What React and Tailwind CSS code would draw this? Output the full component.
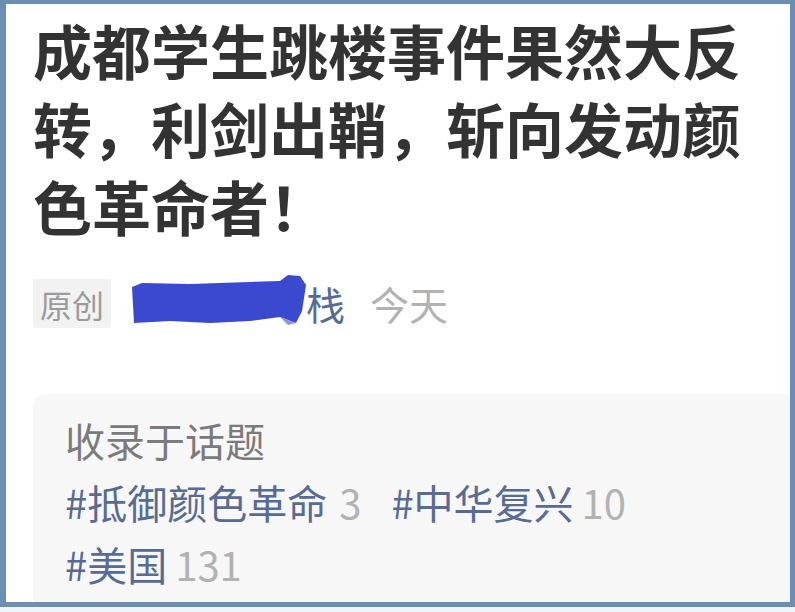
export default function App() {
  const font = { fontFamily: '"Noto Sans CJK SC", "Noto Sans", sans-serif' };
  return (
    <div className="w-[795px] h-[612px] overflow-hidden bg-[#eef6f8]" style={font}>
      <div className="h-[607px] border-t-[4px] border-l-[6px] border-r-[5px] border-b-[5px] border-[#6c8eb4] bg-white overflow-hidden flex flex-col">
        <h1 className="pl-[27px] pr-[30px] pt-[7px] text-[59px] leading-[78px] font-bold text-[#333333]">
          成都学生跳楼事件果然大反转，利剑出鞘，斩向发动颜色革命者！
        </h1>
        <div className="mt-[34px] ml-[27px] flex items-center h-[49px]">
          <span className="h-[49px] w-[78px] flex items-center justify-center bg-[#f2f2f2] rounded-[3px] text-[32px] text-[#9b9b9b]">
            原创
          </span>
          <span className="relative ml-[19px] w-[176px] h-[49px]">
            <svg className="absolute left-0 top-[-6px]" width="180" height="58" viewBox="0 0 180 58">
              <path
                d="M2 14 L12 10 L60 11 L120 9 L150 8 L158 2 L170 3 L176 12 L172 38 L166 50 L150 44 L120 48 L80 50 L40 48 L4 50 Z"
                fill="#3b48d0"
              />
              <path d="M150 44 L166 50 L158 52 Z" fill="#8a94e6" />
            </svg>
          </span>
          <span className="text-[39px] text-[#576b95] leading-none">栈</span>
          <span className="ml-[25px] text-[39px] text-[#b2b2b2] leading-none">今天</span>
        </div>
        <div className="mt-[66px] ml-[27px] flex-1 bg-[#f7f7f7] rounded-tl-[12px] pl-[32px] pt-[15px]">
          <div className="text-[40px] leading-[62px] text-[#7b7b7b]">收录于话题</div>
          <div className="text-[40px] leading-[62px] flex flex-wrap">
            <span className="text-[#576b95]">#抵御颜色革命</span>
            <span className="ml-[12px] text-[#b2b2b2]">3</span>
            <span className="ml-[30px] text-[#576b95]">#中华复兴</span>
            <span className="ml-[8px] text-[#b2b2b2]">10</span>
          </div>
          <div className="text-[40px] leading-[62px] flex">
            <span className="text-[#576b95]">#美国</span>
            <span className="ml-[8px] text-[#b2b2b2]">131</span>
          </div>
        </div>
      </div>
    </div>
  );
}
